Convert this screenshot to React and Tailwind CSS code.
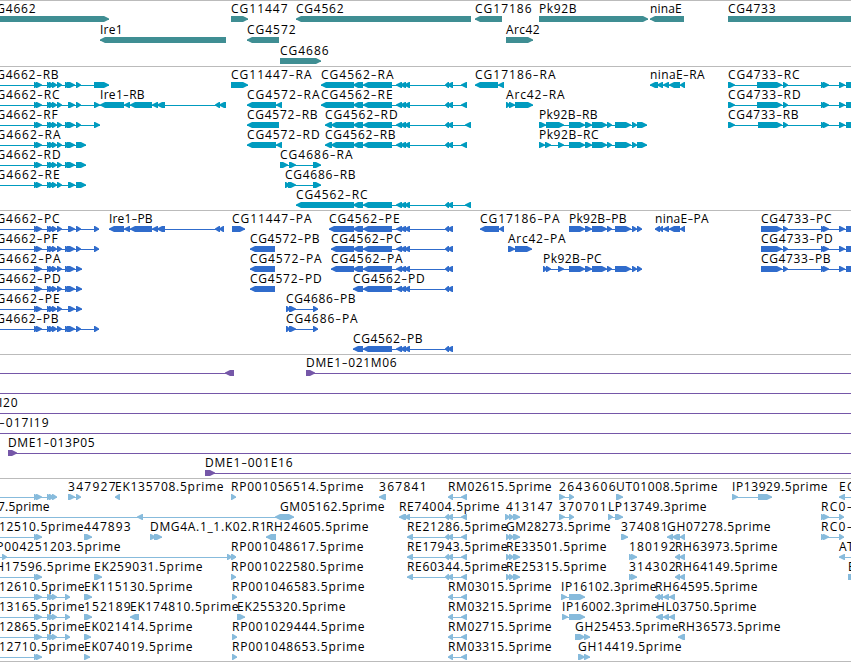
// exon runs shared by several transcripts, "start-end" in px along the region
const A = '34-38 36-42'
const B = '34-38 36-42 47-51 49-54 52-57'
const C = B + ' 57-62'
const CG4562 = '353-363 363-392 396-402 400-406 404-410 445-449 447-453'
const IRE1 = '124-130 130-152 152-158 157-165 215-220'
const PK92B = '569-585 585-592 592-607 607-612 615-631 632-637'
const CG4733 = '783-788 821-825 823-829 839-845 846-870'
const RE = '407-413 445-449 447-453 461-467'
const ARC = '506-510 509-514 513-520'

// feature: [name, label x, label end, strand, exons, line start, line end]
const TRACKS = [
  {
    id: 'genes',
    color: '#3f8e93',
    size: 'h-[66px]',
    rowSize: 'h-[21px]',
    rows: [
      [
        ['CG4662', -12, 36, '+', '-20-109'],
        ['CG11447', 231, 288, '+', '231-248'],
        ['CG4562', 296, 344, '-', '296-471'],
        ['CG17186', 475, 532, '-', '475-502'],
        ['Pk92B', 539, 577, '+', '539-648'],
        ['ninaE', 650, 682, '-', '650-684'],
        ['CG4733', 728, 776, '+', '728-870'],
      ],
      [
        ['Ire1', 100, 123, '-', '100-226'],
        ['CG4572', 247, 296, '-', '247-279'],
        ['Arc42', 506, 540, '+', '506-533'],
      ],
      [['CG4686', 280, 329, '+', '280-321']],
    ],
  },
  {
    id: 'transcripts',
    color: '#009bbf',
    size: 'h-36',
    rowSize: 'h-5',
    rows: [
      [
        ['CG4662-RB', -12, 59, '+', C + ' 65-70 67-75 76-81 94-109', -20],
        ['CG11447-RA', 231, 312, '+', '231-248'],
        ['CG4562-RA', 321, 394, '-', '321-354 ' + CG4562 + ' 461-467'],
        ['CG17186-RA', 475, 556, '-', '475-498 498-504'],
        ['ninaE-RA', 650, 705, '-', '650-658 657-663 663-669 669-680 680-685'],
        ['CG4733-RC', 728, 800, '+', '728-735 757-782 ' + CG4733],
      ],
      [
        ['CG4662-RC', -12, 60, '+', C + ' 68-75 76-81 94-100', -20],
        ['Ire1-RB', 100, 145, '-', '100-124 ' + IRE1 + ' 219-226'],
        ['CG4572-RA', 247, 320, '-', '247-276 276-282'],
        ['CG4562-RE', 321, 393, '-', '321-354 ' + CG4562 + ' 461-467'],
        ['Arc42-RA', 506, 565, '+', '506-510 509-515 515-533'],
        ['CG4733-RD', 728, 801, '+', '728-735 757-782 ' + CG4733],
      ],
      [
        ['CG4662-RF', -12, 58, '+', C + ' 65-70 67-75 76-81 94-100', -20],
        ['CG4572-RB', 247, 318, '-', '247-279'],
        ['CG4562-RD', 325, 398, '-', '325-332 331-354 ' + CG4562 + ' 465-471'],
        ['Pk92B-RB', 539, 598, '+', '539-546 546-564 ' + PK92B + ' 637-647'],
        ['CG4733-RB', 728, 799, '+', '728-735 758-782 ' + CG4733],
      ],
      [
        ['CG4662-RA', -12, 61, '+', C + ' 65-70 67-75 76-86', -20],
        ['CG4572-RD', 247, 320, '-', '247-276 276-282'],
        ['CG4562-RB', 325, 396, '-', '325-332 331-354 ' + CG4562 + ' 461-467'],
        ['Pk92B-RC', 539, 599, '+', '539-545 545-551 558-564 ' + PK92B + ' 637-647'],
      ],
      [
        ['CG4662-RD', -12, 61, '+', C + ' 65-70 67-75 76-86', -20],
        ['CG4686-RA', 280, 353, '+', '280-288 289-296 313-321'],
      ],
      [
        ['CG4662-RE', -12, 60, '+', C + ' 68-75 76-86', -20],
        ['CG4686-RB', 285, 356, '+', '285-290 288-296 313-321'],
      ],
      [['CG4562-RC', 296, 368, '-', '296-354 ' + CG4562 + ' 465-471']],
    ],
  },
  {
    id: 'proteins',
    color: '#306ccc',
    size: 'h-36',
    rowSize: 'h-5',
    rows: [
      [
        ['CG4662-PC', -12, 60, '+', C + ' 68-75 76-81 94-99', -20],
        ['Ire1-PB', 109, 153, '-', '109-124 ' + IRE1 + ' 219-224'],
        ['CG11447-PA', 232, 312, '+', '232-245'],
        ['CG4562-PE', 329, 400, '-', '329-354 ' + CG4562],
        ['CG17186-PA', 480, 560, '-', '480-499 499-504'],
        ['Pk92B-PB', 569, 627, '+', PK92B + ' 637-642'],
        ['ninaE-PA', 655, 709, '-', '655-660 659-663 663-669 669-680 680-685'],
        ['CG4733-PC', 761, 832, '+', '761-782 ' + CG4733],
      ],
      [
        ['CG4662-PF', -12, 58, '+', C + ' 65-70 67-75 76-81 94-99', -20],
        ['CG4572-PB', 250, 320, '-', '250-275'],
        ['CG4562-PC', 331, 402, '-', '331-354 ' + CG4562],
        ['Arc42-PA', 508, 566, '+', '508-515 515-532'],
        ['CG4733-PD', 761, 833, '+', '761-782 ' + CG4733],
      ],
      [
        ['CG4662-PA', -12, 61, '+', C + ' 65-70 67-75 76-82', -20],
        ['CG4572-PA', 250, 322, '-', '250-275'],
        ['CG4562-PA', 331, 403, '-', '331-354 ' + CG4562],
        ['Pk92B-PC', 543, 602, '+', '543-547 546-551 558-564 ' + PK92B + ' 637-642'],
        ['CG4733-PB', 761, 831, '+', '761-782 ' + CG4733],
      ],
      [
        ['CG4662-PD', -12, 61, '+', C + ' 65-70 67-75 76-82', -20],
        ['CG4572-PD', 250, 322, '-', '250-275'],
        ['CG4562-PD', 353, 425, '-', CG4562],
      ],
      [
        ['CG4662-PE', -12, 60, '+', C + ' 68-75 76-82', -20],
        ['CG4686-PB', 286, 356, '+', '286-290 289-296 313-318'],
      ],
      [
        ['CG4662-PB', -12, 59, '+', C + ' 65-70 67-75 76-81 94-99', -20],
        ['CG4686-PA', 286, 358, '+', '286-290 289-296 313-318'],
      ],
      [['CG4562-PB', 353, 423, '-', CG4562]],
    ],
  },
  {
    id: 'clones',
    color: '#7557a8',
    size: 'h-[124px]',
    rowSize: 'h-5',
    rows: [
      [
        ['', 0, 0, '-', '225-234', -20],
        ['DME1-021M06', 306, 397, '+', '306-315', 306, 870],
      ],
      [['', 0, 0, '+', '', -20, 870]],
      [['I20', -1, 18, '+', '', -20, 870]],
      [['DME1-017I19', -38, 49, '+', '', -20, 870]],
      [['DME1-013P05', 8, 95, '+', '8-17', 8, 870]],
      [['DME1-001E16', 205, 293, '+', '205-215', 205, 870]],
    ],
  },
  {
    id: 'ests',
    color: '#87bbdc',
    size: 'h-[183px]',
    rowSize: 'h-5',
    rows: [
      [
        ['', 0, 0, '+', B, -20],
        ['347927', 68, 116, '+', '68-75 76-81'],
        ['EK135708.5prime', 115, 224, '-', '115-120'],
        ['RP001056514.5prime', 231, 364, '+', '231-236'],
        ['367841', 379, 427, '-', '379-386'],
        ['RM02615.5prime', 448, 552, '-', '448-453 461-467'],
        ['2643606', 559, 616, '+', '559-565 569-574'],
        ['UT01008.5prime', 616, 718, '+', '616-623'],
        ['IP13929.5prime', 732, 828, '+', '732-738 758-772'],
        ['EC0', 839, 863, '-', '839-845', 839, 870],
      ],
      [
        ['7.5prime', -2, 50, '-', '137-143 275-288', -20],
        ['GM05162.5prime', 280, 385, '+', '280-289 288-294'],
        ['RE74004.5prime', 399, 500, '-', '399-406 404-410 445-449 447-453 461-467'],
        ['413147', 506, 553, '+', '505-510 509-514 513-520'],
        ['370701', 559, 607, '+', '559-565 569-574'],
        ['LP13749.3prime', 608, 707, '+', '608-613 615-623'],
        ['RC0-', 821, 853, '+', '821-825 823-829 839-844'],
      ],
      [
        ['12510.5prime', -1, 84, '+', A, -20],
        ['447893', 84, 131, '+', '84-92'],
        ['DMG4A.1_1.K02.R1', 150, 267, '+', '150-156 154-162'],
        ['RH24605.5prime', 266, 369, '-', '266-276'],
        ['RE21286.5prime', 407, 508, '-', RE],
        ['GM28273.5prime', 506, 611, '+', ARC],
        ['374081', 621, 668, '+', '621-628'],
        ['GH07278.5prime', 667, 771, '-', '667-673 672-680 680-685'],
        ['RC0-', 821, 853, '+', '821-825 823-829 839-844'],
      ],
      [
        ['RP004251203.5prime', -12, 121, '+', '2-7 227-232 231-236', -20],
        ['RP001048617.5prime', 231, 364, '+', '231-236'],
        ['RE17943.5prime', 407, 508, '-', RE],
        ['RE33501.5prime', 506, 607, '+', ARC],
        ['180192', 629, 676, '+', '629-633 631-637'],
        ['RH63973.5prime', 675, 778, '-', '675-680 679-685'],
        ['AT', 839, 854, '-', '839-845', 839, 870],
      ],
      [
        ['RH17596.5prime', -13, 91, '+', A, -20],
        ['EK259031.5prime', 94, 203, '+', '94-102'],
        ['RP001022580.5prime', 231, 364, '+', '231-236'],
        ['RE60344.5prime', 407, 508, '-', RE],
        ['RE25315.5prime', 506, 607, '+', ARC],
        ['314302', 629, 676, '+', '629-633 631-637'],
        ['RH64149.5prime', 675, 778, '-', '675-680 679-685'],
        ['E', 848, 856, '+', '848-870'],
      ],
      [
        ['12610.5prime', -1, 85, '+', B + ' 65-70', -20],
        ['EK115130.5prime', 84, 193, '+', '84-92'],
        ['RP001046583.5prime', 232, 365, '+', '232-237'],
        ['RM03015.5prime', 448, 552, '-', '448-453 461-467'],
        ['IP16102.3prime', 561, 657, '+', '561-567 569-585'],
        ['RH64595.5prime', 655, 758, '-', '655-660 658-663 663-669 669-675'],
      ],
      [
        ['13165.5prime', -1, 85, '+', B + ' 65-70', -20],
        ['152189', 84, 131, '+', '84-92'],
        ['EK174810.5prime', 130, 239, '-', '130-139'],
        ['EK255320.5prime', 237, 346, '+', '237-245'],
        ['RM03215.5prime', 448, 552, '-', '448-453 461-467'],
        ['IP16002.3prime', 562, 658, '+', '562-568 569-585'],
        ['HL03750.5prime', 656, 757, '-', '656-663 663-669 669-675'],
      ],
      [
        ['12865.5prime', -1, 85, '+', B + ' 65-70', -20],
        ['EK021414.5prime', 84, 193, '+', '84-91'],
        ['RP001029444.5prime', 232, 365, '+', '232-237'],
        ['RM02715.5prime', 448, 552, '-', '448-453 461-467'],
        ['GH25453.5prime', 575, 679, '+', '575-585 584-590'],
        ['RH36573.5prime', 678, 781, '-', '678-685'],
      ],
      [
        ['12710.5prime', -1, 85, '+', A, -20],
        ['EK074019.5prime', 84, 193, '+', '84-90'],
        ['RP001048653.5prime', 232, 365, '+', '232-237'],
        ['RM03315.5prime', 448, 552, '-', '448-453 461-467'],
        ['GH14419.5prime', 578, 682, '+', '578-585 584-590'],
      ],
    ],
  },
]

const parseExons = str =>
  [...str.matchAll(/(-?\d+)-(\d+)/g)].map(m => [Number(m[1]), Number(m[2])])

// block with an arrow head on the strand's side
function exonPoints([s, e], strand) {
  const head = Math.min(6, e - s)
  if (strand === '+') {
    const h = e - head
    return `${s},15 ${h + 1},15 ${e},17.4 ${e},18.6 ${h + 1},21 ${s},21`
  }
  const h = s + head
  return `${e},15 ${h - 1},15 ${s},17.4 ${s},18.6 ${h - 1},21 ${e},21`
}

// the hyphen is set larger so that it reads as a full-width dash
function Label({ name, x, end }) {
  const [head, tail] = name.split('-')
  return (
    <text x={x} y="12" textLength={end - x - 0.4} className="fill-black">
      {head}
      {tail !== undefined && <tspan dy="2" className="text-[18px] font-light">-</tspan>}
      {tail && <tspan dy="-2">{tail}</tspan>}
    </text>
  )
}

function Feature({ feature, color }) {
  const [name, x, end, strand, exonStr, from, to] = feature
  const exons = parseExons(exonStr)
  const x1 = from ?? exons[0][0]
  const x2 = to ?? exons[exons.length - 1][1]

  return (
    <g fill={color}>
      <rect x={x1} y="18" width={x2 - x1} height="1" />
      {exons.map((exon, i) => <polygon key={i} points={exonPoints(exon, strand)} />)}
      {name && <Label name={name} x={x} end={end} />}
    </g>
  )
}

function Track({ track }) {
  return (
    <section className={`flex flex-col shrink-0 border-t border-[#bbbbbb] ${track.size}`}>
      {track.rows.map((row, i) => (
        <svg key={i} className={`block w-full shrink-0 overflow-visible ${track.rowSize}`}>
          {row.map((f, j) => <Feature key={j} feature={f} color={track.color} />)}
        </svg>
      ))}
    </section>
  )
}

export default function App() {
  return (
    <main className="flex flex-col w-[851px] h-[662px] overflow-hidden bg-white border-b border-[#bbbbbb] font-['Open_Sans','Noto_Sans',sans-serif] text-[12px]">
      {TRACKS.map(t => <Track key={t.id} track={t} />)}
    </main>
  )
}
